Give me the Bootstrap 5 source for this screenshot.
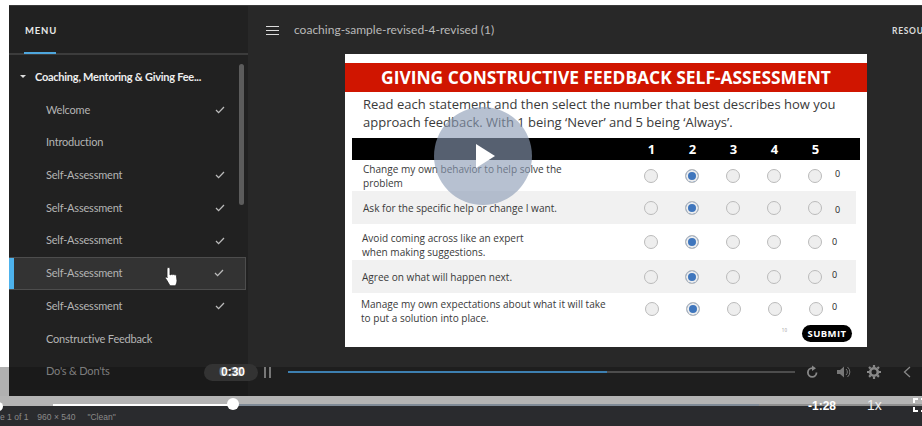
<!DOCTYPE html>
<html lang="en"><head><meta charset="utf-8">
<link href="https://cdn.jsdelivr.net/npm/bootstrap@5.3.0/dist/css/bootstrap.min.css" rel="stylesheet">
<style>
html,body{height:426px;overflow:hidden;background:#fff;margin:0}
.stage{width:922px;height:426px;position:relative;overflow:hidden;font-family:Lato,"Liberation Sans",sans-serif}
.player{margin:5px 0 0 9px;width:913px;height:391px;background:#282828;border-top:1px solid #3a3a3a;position:relative}
.side{width:239px;background:#212121;height:100%;flex:none}
.mhead{height:49px;border-bottom:2px solid #3c3c3c;position:relative;color:#e8e8e8;font-size:9.5px;font-weight:700;letter-spacing:.8px;padding:18px 0 0 16px}
.mhead::after{content:"";position:absolute;left:15px;bottom:-1px;width:32px;height:2px;background:#4ea6dc}
.sect{color:#eee;font-size:11px;letter-spacing:-.25px;font-weight:700;height:38.6px;padding:14px 0 0 26px;position:relative}
.sect::before{content:"";position:absolute;left:11px;top:20px;border:3px solid transparent;border-top:3px solid #ddd}
.lesson{height:32.7px;display:flex;align-items:center;justify-content:space-between;padding:0 23px 0 37px;color:#b4b4b4;font-size:11px;letter-spacing:-.2px;position:relative}
.lesson.on{background:#333;border:1px solid #4d4d4d;border-left:0;margin-right:2px;padding-right:21px}
.lesson.on::before{content:"";position:absolute;left:0;top:0;bottom:0;width:5px;background:#4db2ec}
.thumb{position:absolute;left:230px;top:58px;width:5px;height:141px;border-radius:3px;background:#5c5c5c}
.titlebar{height:48px;display:flex;align-items:center;color:#b9b9b9;font-size:12px;padding:0 0 0 18px;gap:15px}
.burger{width:13px;height:9px;border-top:1px solid #ddd;border-bottom:1px solid #ddd;position:relative}
.burger::after{content:"";position:absolute;left:0;right:0;top:3px;border-top:1px solid #ddd}
.res{position:absolute;left:644px;top:19px;font-size:8.5px;font-weight:700;letter-spacing:.7px;color:#dcdcdc;white-space:nowrap}
.slide{margin-left:97px;width:522px;height:293px;background:#fff;font-family:"Open Sans","Noto Sans",sans-serif;color:#333;padding-top:9px}
.banner{height:29px;background:#d01500;color:#fff;font-weight:700;font-size:17.4px;text-align:center;line-height:29px}
.intro{padding:3px 0 0 18px;height:46px;font-size:13px;line-height:18px;white-space:nowrap;color:#3a3a3a}
.qrow{margin-left:7px;width:504px;display:grid;grid-template-columns:279px repeat(5,41px) 1fr;align-items:center;justify-items:center}
.qhead{width:508px;height:22px;background:#000;color:#fff;font-weight:700;font-size:13px;line-height:22px}
.band{background:#f1f1f1}
.rh1{height:31px}.rh2{height:33px}.rh3{height:36px}.rh4{height:33px}.rh5{height:32px}
.q{justify-self:start;font-size:10.05px;line-height:14px;white-space:nowrap;color:#3a3a3a}
.pl2{padding-left:11px}.pl1{padding-left:10px}.pl0{padding-left:9px}.down3{margin-top:6px}.down2{margin-top:4px}
.radio{width:14px;height:14px;border-radius:50%;border:1.5px solid #bbb;background:#eee;display:block;margin-right:1px}
.radio.sel{background:#3f76bd;box-shadow:inset 0 0 0 2px #eee}
.nudge{margin-left:1px;margin-right:0}
.zero{justify-self:start;font-size:9px;color:#222;margin-left:-1px}
.zup{margin-top:-4px}.zdn{margin-top:4px}.zin{margin-left:-4px}
.sfoot{display:flex;justify-content:flex-end;align-items:flex-start;padding-right:15px;gap:15px}
.submit{width:50px;height:17px;border-radius:9px;background:#000;color:#fff;font-weight:700;font-size:9.5px;line-height:17px;text-align:center;letter-spacing:.4px}
.tiny{font-size:4.5px;color:#999;line-height:10px}
.play{position:absolute;left:434px;top:107px;width:98px;height:98px;border-radius:50%;background:rgba(138,155,180,.62);display:flex;align-items:center;justify-content:center;padding-left:5px}
.cursor{position:absolute;left:164px;top:266px}
.tint{position:absolute;left:0;right:0;top:367px;height:29px;background:rgba(12,12,12,.33)}
.graytint{position:absolute;left:0;top:367px;width:9px;height:29px;background:#b0b0b0}
.ctrl{position:absolute;left:204px;right:0;top:363px;height:18px;display:flex;align-items:center}
.timebub{width:54px;height:17px;border-radius:9px;background:#333;color:#fff;font-family:"Liberation Sans",sans-serif;font-size:12px;font-weight:700;text-align:center;line-height:17px;padding-left:4px;text-shadow:-2px 0 0 #777}
.pause{width:7px;height:11px;border-left:2px solid #777;border-right:2px solid #777;margin:0 17px 0 6px}
.track{width:507px;height:2px;background:#4d4d4d;margin-right:11px}
.track i{display:block;height:100%;width:63%;background:#3d7fb0}
.m18{margin-left:18px}.m16{margin-left:16px}.m22{margin-left:22px}
.strip{height:10px;background:#b4b4b4;position:relative}
.rail{position:absolute;left:0;right:0;top:8px;height:2px;display:flex}
.r0{width:53px}.r1{width:180px;background:#fff}.r2{width:526px;background:#7f8a96}.r3{flex:1;background:#8f8f8f}
.strip2{height:20px;background:#2a2b2e;color:#8a8a8a;font-family:"Liberation Sans",sans-serif;font-size:8.5px;padding-top:5px;line-height:12px;white-space:nowrap;display:flex;gap:12px}
.pg{margin-right:-3px}
.knob{position:absolute;left:227px;top:398px;width:12px;height:12px;border-radius:50%;background:#fff}
.knob0{position:absolute;left:-6px;top:402px;width:9px;height:9px;border-radius:50%;background:#fff}
.tl{position:absolute;left:808px;top:396px;height:18px;display:flex;align-items:center;color:#fff;white-space:nowrap}
.btime{font:700 12px/14px "Liberation Sans",sans-serif;width:28px;margin-top:1px}
.rate{font:400 14px/18px "Liberation Sans",sans-serif;color:#eee;margin-left:31px}
.full{margin-left:31px;flex:none}
</style></head><body>
<div class="stage">
<div class="player d-flex">
  <div class="side">
    <div class="mhead">MENU</div>
    <div class="sect">Coaching, Mentoring &amp; Giving Fee...</div>
    <div class="lesson"><span>Welcome</span><svg width="10" height="8" viewBox="0 0 10 8"><path d="M1 4l2.6 2.6L9 1" fill="none" stroke="#bbb" stroke-width="1.3"/></svg></div>
    <div class="lesson"><span>Introduction</span></div>
    <div class="lesson"><span>Self-Assessment</span><svg width="10" height="8" viewBox="0 0 10 8"><path d="M1 4l2.6 2.6L9 1" fill="none" stroke="#bbb" stroke-width="1.3"/></svg></div>
    <div class="lesson"><span>Self-Assessment</span><svg width="10" height="8" viewBox="0 0 10 8"><path d="M1 4l2.6 2.6L9 1" fill="none" stroke="#bbb" stroke-width="1.3"/></svg></div>
    <div class="lesson"><span>Self-Assessment</span><svg width="10" height="8" viewBox="0 0 10 8"><path d="M1 4l2.6 2.6L9 1" fill="none" stroke="#bbb" stroke-width="1.3"/></svg></div>
    <div class="lesson on"><span>Self-Assessment</span><svg width="10" height="8" viewBox="0 0 10 8"><path d="M1 4l2.6 2.6L9 1" fill="none" stroke="#bbb" stroke-width="1.3"/></svg></div>
    <div class="lesson"><span>Self-Assessment</span><svg width="10" height="8" viewBox="0 0 10 8"><path d="M1 4l2.6 2.6L9 1" fill="none" stroke="#bbb" stroke-width="1.3"/></svg></div>
    <div class="lesson"><span>Constructive Feedback</span></div>
    <div class="lesson"><span>Do's &amp; Don'ts</span></div>
  </div>
  <div class="thumb"></div>
  <div class="flex-grow-1 position-relative">
    <div class="titlebar"><div class="burger"></div><span>coaching-sample-revised-4-revised (1)</span></div>
    <div class="res">RESOURCES</div>
    <div class="slide">
      <div class="banner">GIVING CONSTRUCTIVE FEEDBACK SELF-ASSESSMENT</div>
      <div class="intro">Read each statement and then select the number that best describes how you<br>approach feedback. With 1 being ‘Never’ and 5 being ‘Always’.</div>
      <div class="qrow qhead"><span></span><span>1</span><span>2</span><span>3</span><span>4</span><span>5</span></div>
      <div class="qrow rh1"><div class="q pl2">Change my own behavior to help solve the<br>problem</div><i class="radio"></i><i class="radio sel"></i><i class="radio"></i><i class="radio"></i><i class="radio"></i><span class="zero zup">0</span></div>
      <div class="qrow band rh2"><div class="q pl2">Ask for the specific help or change I want.</div><i class="radio"></i><i class="radio sel"></i><i class="radio"></i><i class="radio"></i><i class="radio"></i><span class="zero zdn">0</span></div>
      <div class="qrow rh3"><div class="q pl1 down3">Avoid coming across like an expert<br>when making suggestions.</div><i class="radio"></i><i class="radio sel"></i><i class="radio"></i><i class="radio"></i><i class="radio"></i><span class="zero zin">0</span></div>
      <div class="qrow band rh4"><div class="q pl1">Agree on what will happen next.</div><i class="radio"></i><i class="radio sel"></i><i class="radio"></i><i class="radio"></i><i class="radio"></i><span class="zero zin zup">0</span></div>
      <div class="qrow rh5"><div class="q pl0 down2">Manage my own expectations about what it will take<br>to put a solution into place.</div><i class="radio nudge"></i><i class="radio sel nudge"></i><i class="radio nudge"></i><i class="radio nudge"></i><i class="radio nudge"></i><span class="zero zin zup">0</span></div>
      <div class="sfoot"><div class="tiny">10</div><div class="submit">SUBMIT</div></div>
    </div>
  </div>
</div>
<div class="strip"><div class="rail"><div class="r0"></div><div class="r1"></div><div class="r2"></div><div class="r3"></div></div></div>
<div class="strip2"><span class="pg">e 1 of 1</span><span>960 × 540</span><span>"Clean"</span></div>
<div class="play"><svg width="19" height="24" viewBox="0 0 19 24"><path d="M0 0l19 12L0 24z" fill="#fff"/></svg></div>
<svg class="cursor" width="16" height="21" viewBox="0 0 16 21"><path d="M4.500 1.500c1 0 1.500.6 1.500 1.500v6l.6-.2c.2-.8 1.600-.8 2 0 .3-.6 1.600-.6 2 .2.500-.4 1.700-.2 1.900.8l.5 5c0 2-.8 3.200-1.500 5H6l-3.500-6c-.6-1-1.500-1.800-1-2.500.5-.6 1.500-.2 1.900.4L3 11V3c0-.9.5-1.500 1.500-1.500z" fill="#fff" stroke="#222" stroke-width=".8"/></svg>
<div class="tint"></div><div class="graytint"></div>
<div class="ctrl">
  <div class="timebub">0:30</div>
  <div class="pause"></div>
  <div class="track"><i></i></div>
  <svg width="13" height="14" viewBox="0 0 13 14"><path d="M10.500 7.500a4.300 4.300 0 1 1-4.300-4.300" fill="none" stroke="#888" stroke-width="1.800"/><path d="M6 .5l4 2.700L6 6z" fill="#888"/></svg>
  <svg class="m18" width="14" height="12" viewBox="0 0 14 12"><path d="M0 4h3l4-3.500v11L3 8H0z" fill="#777"/><path d="M9 3a4 4 0 0 1 0 6M10.500 1a6.500 6.500 0 0 1 0 10" fill="none" stroke="#777"/></svg>
  <svg class="m16" width="14" height="14" viewBox="0 0 14 14"><circle cx="7" cy="7" r="3.800" fill="none" stroke="#888" stroke-width="2.600"/><path d="M7 0v14M0 7h14M2 2l10 10M12 2L2 12" stroke="#888" stroke-width="2.200" stroke-dasharray="2.200 9.600 2.200"/></svg>
  <svg class="m22" width="8" height="12" viewBox="0 0 8 12"><path d="M7 1L1.500 6 7 11" fill="none" stroke="#888" stroke-width="1.300"/></svg>
</div>
<div class="knob0"></div><div class="knob"></div>
<div class="tl"><div class="btime">-1:28</div><div class="rate">1x</div>
  <svg class="full" width="12" height="14" viewBox="0 0 12 14"><path d="M5 1H1v4M1 9v4h4M8 1h4M8 13h4" fill="none" stroke="#fff" stroke-width="2"/></svg>
</div>
</div>
</body></html>
